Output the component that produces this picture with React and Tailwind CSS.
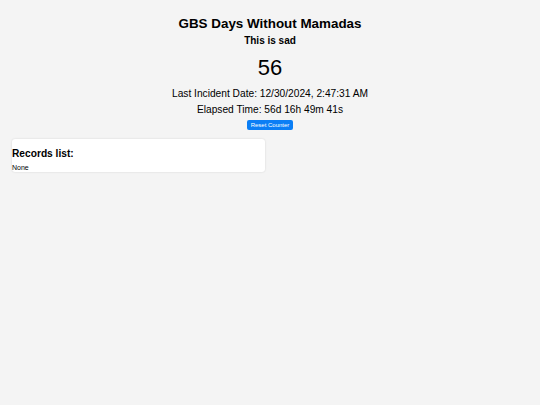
export default function App() {
  return (
    <div
      className="min-h-[405px] bg-[#f4f4f4] text-black"
      style={{ fontFamily: '"Liberation Sans", Arial, sans-serif' }}
    >
      <div className="flex flex-col items-center pt-[15px]">
        <h1 className="text-[13.4px] font-bold leading-[17px]">GBS Days Without Mamadas</h1>
        <h2 className="mt-[2px] text-[10px] font-bold leading-[14px]">This is sad</h2>
        <div className="mt-[7px] text-[22px] leading-[26px]">56</div>
        <p className="mt-[6px] text-[10.2px] leading-[14px]">Last Incident Date: 12/30/2024, 2:47:31 AM</p>
        <p className="mt-[2px] text-[10.2px] leading-[14px]">Elapsed Time: 56d 16h 49m 41s</p>
        <button className="mt-[3px] h-[10px] rounded-[2px] bg-[#0b7ef5] px-[4px] text-[6px] leading-[10px] text-white">
          Reset Counter
        </button>
      </div>
      <div className="mx-[12px] mt-[9px] w-[253px] rounded-[3px] bg-white pb-[0px] pt-[8px] shadow-[0_0_2px_rgba(0,0,0,0.15)]">
        <h3 className="text-[10.2px] font-bold leading-[14px]">Records list:</h3>
        <p className="mt-[2px] text-[7px] leading-[9px] text-black">None</p>
      </div>
    </div>
  );
}
